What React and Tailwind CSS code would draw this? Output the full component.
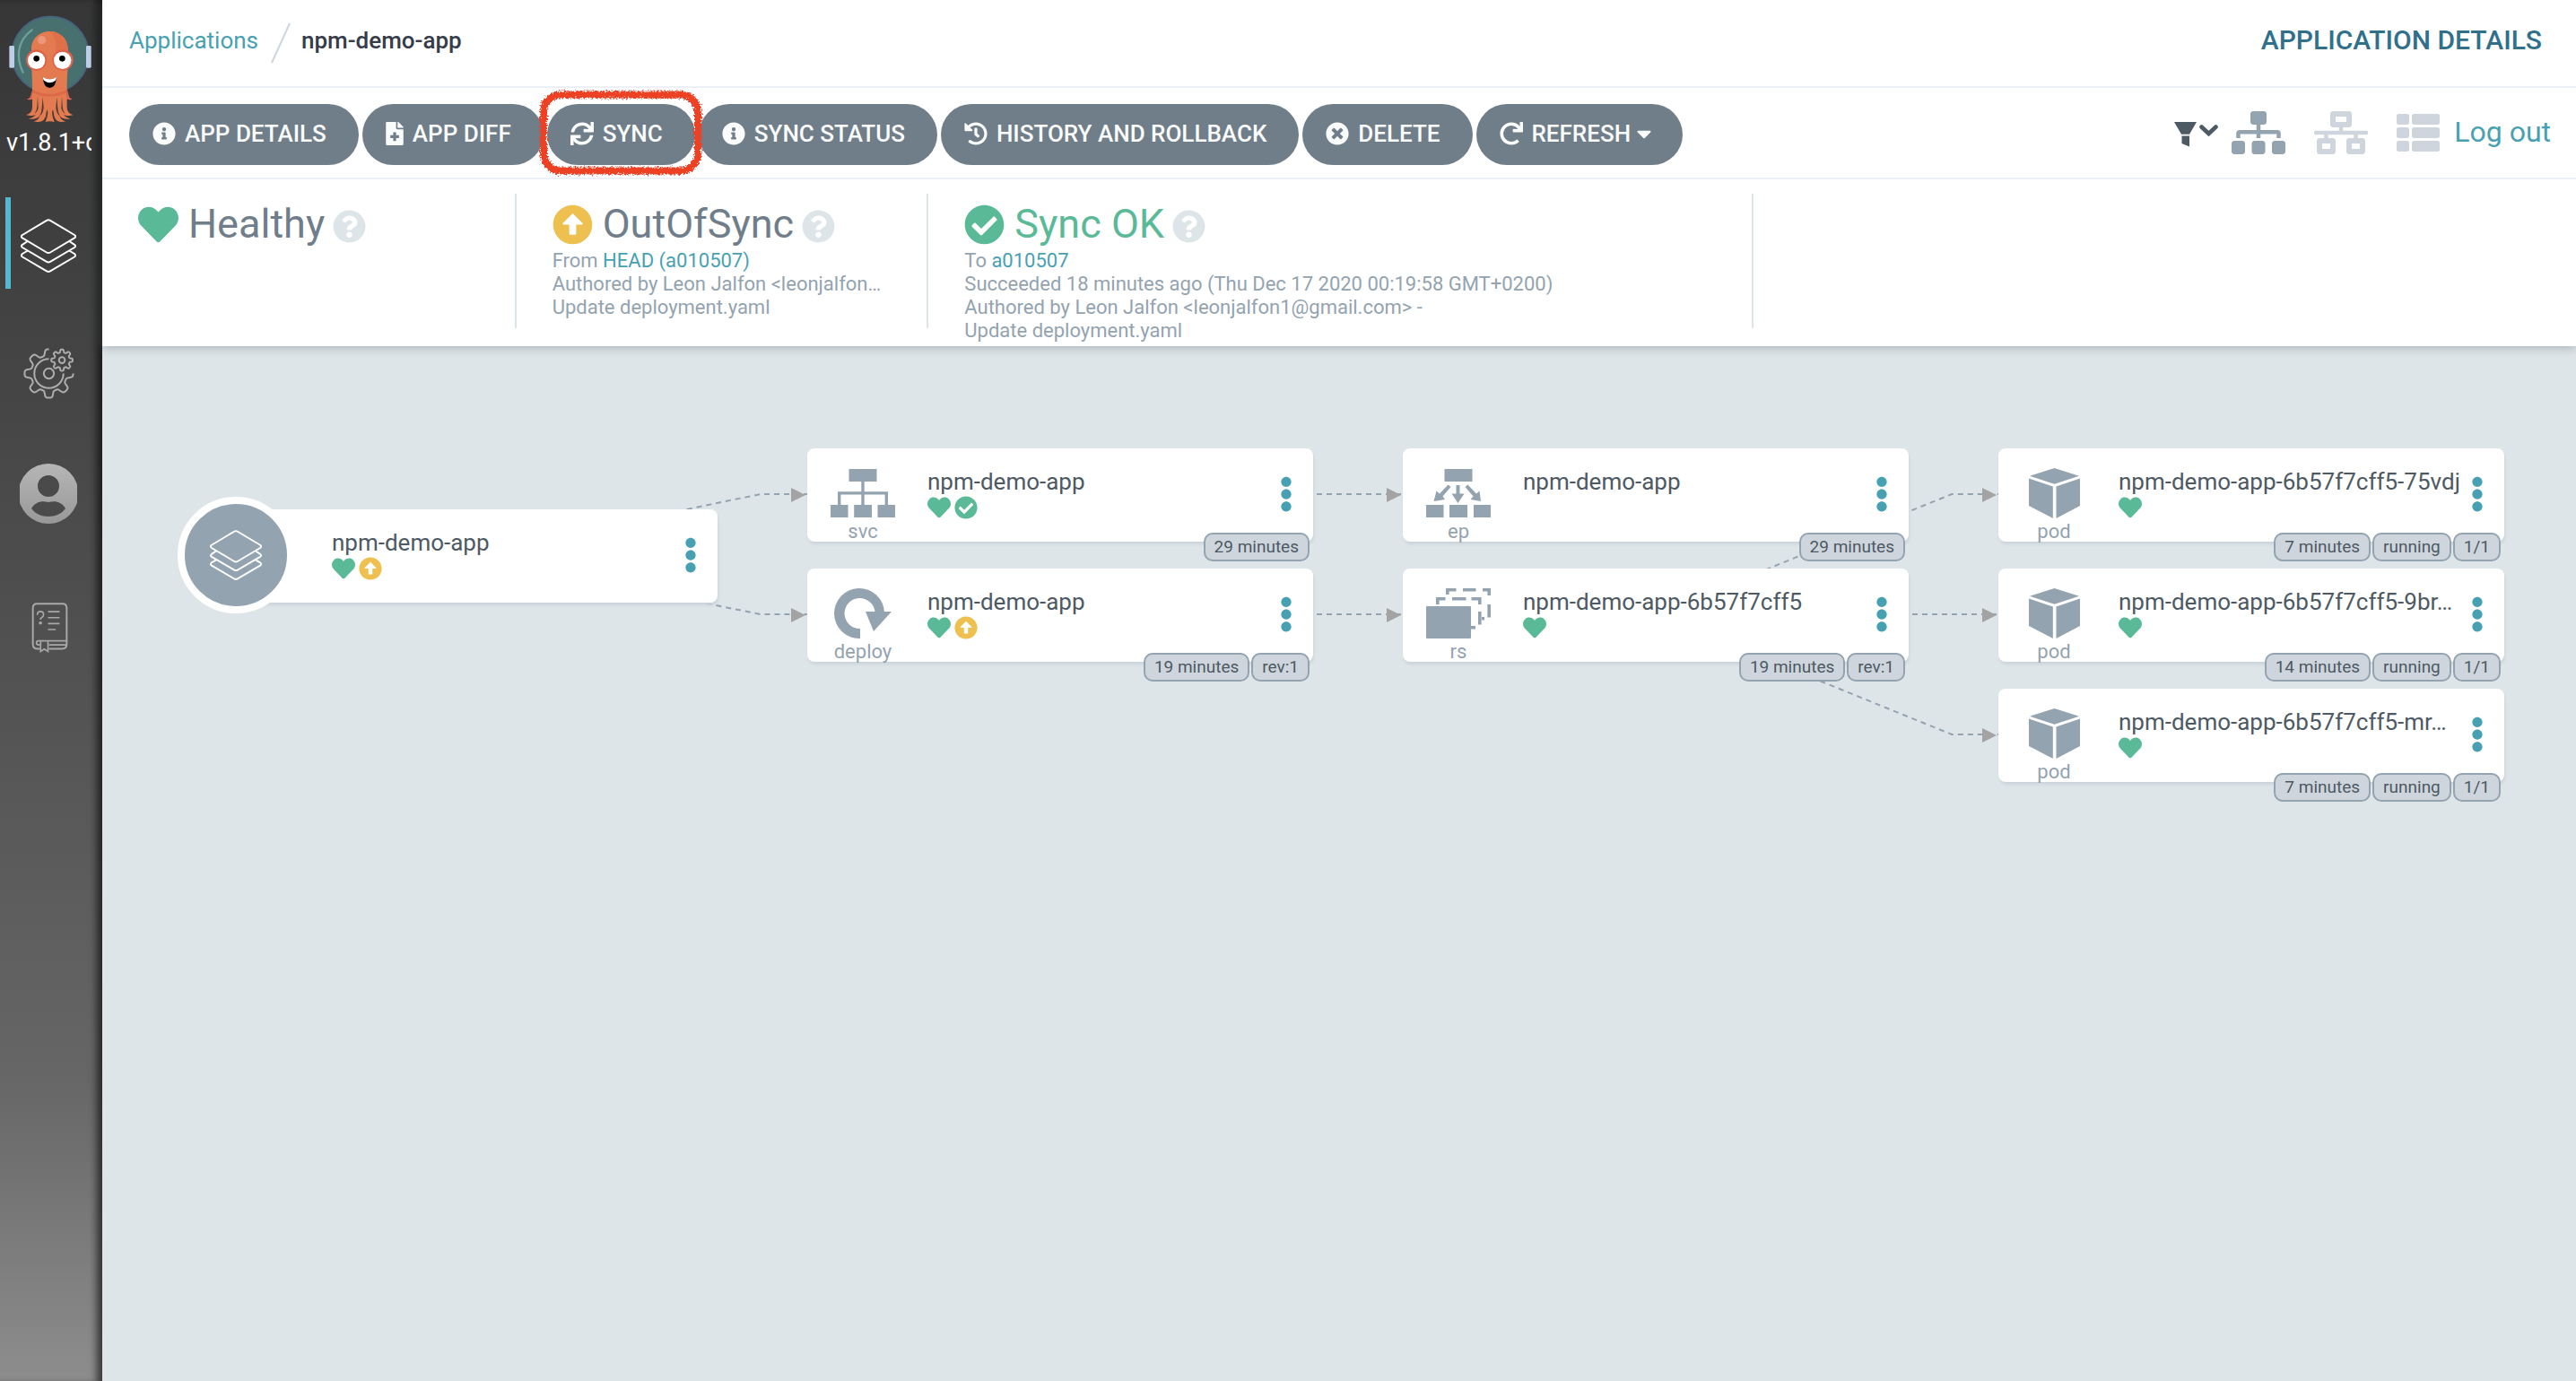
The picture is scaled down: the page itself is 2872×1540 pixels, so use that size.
import React from "react";
import {
  FaInfoCircle,
  FaFileMedical,
  FaSync,
  FaHistory,
  FaTimesCircle,
  FaRedo,
  FaCaretDown,
  FaHeart,
  FaArrowAltCircleUp,
  FaCheckCircle,
  FaQuestionCircle,
  FaSitemap,
  FaNetworkWired,
  FaThList,
  FaEllipsisV,
} from "react-icons/fa";

/* ---------- drawings ---------- */

function ArgoLogo() {
  return (
    <svg viewBox="30 20 276 360" className="h-[120px] w-[92px]" role="img" aria-label="Argo">
      <circle cx="168" cy="152" r="128" fill="#48706f" stroke="#46627c" strokeWidth="5" />
      <path d="M107 69C58 105 52 160 77 211" fill="none" stroke="#6f9f9b" strokeWidth="7" strokeLinecap="round" />
      <rect x="31" y="122" width="17" height="74" rx="4" fill="#bdcfe8" />
      <rect x="288" y="122" width="17" height="74" rx="4" fill="#bdcfe8" />
      <path d="M106 270C104 290 102 298 90 301C98 304 106 303 110 300Z" fill="#dc6650" />
      <path d="M227 270C229 290 231 298 242 301C234 304 226 303 222 300Z" fill="#dc6650" />
      <path
        d="M105 133C105 98 132 74 166 74S227 98 227 133V190C225 215 224 240 224 262V325C224 342 232 350 246 353C234 357 220 357 213 352C218 360 226 364 236 366C222 370 206 366 199 356C201 366 208 372 220 375C204 379 190 377 184 364L168 330L150 364C144 377 130 379 112 375C124 372 131 366 133 356C126 366 110 370 96 366C106 364 114 360 119 352C112 357 98 357 86 353C100 350 108 342 108 325V262C108 240 107 215 105 190Z"
        fill="#e47b50"
      />
      <path d="M166 74C200 74 227 98 227 133V160H186C190 120 186 90 166 74Z" fill="#df7049" />
      <path d="M108 268Q166 298 224 268V279Q166 306 108 279Z" fill="#dc6a48" />
      <path d="M126 290L128 330Q126 343 115 349Q124 338 124 325ZM143 294L146 330Q144 350 132 358Q140 345 140 330ZM190 294L187 330Q189 350 201 358Q193 345 193 330ZM207 290L205 330Q207 343 218 349Q209 338 209 325Z" fill="#4a3a35" />
      <path d="M160 330L152 377Q166 372 182 377L174 330Z" fill="#e47b50" />
      <path d="M157 335L160 345Q158 368 150 377Q153 365 154 350ZM177 335L174 345Q176 368 184 377Q181 365 180 350Z" fill="#4a3a35" />
      <circle cx="140" cy="103" r="14" fill="#e9987a" />
      <circle cx="122" cy="170" r="35" fill="#df6248" />
      <circle cx="210" cy="170" r="35" fill="#df6248" />
      <circle cx="122" cy="171" r="29" fill="#fff" />
      <circle cx="209" cy="171" r="29" fill="#fff" />
      <circle cx="122" cy="165" r="10" fill="#000" />
      <circle cx="208" cy="165" r="10" fill="#000" />
      <path d="M143 226Q166 242 189 226Q187 263 166 263Q146 263 143 226Z" fill="#000" />
      <path d="M143 226Q166 242 189 226Q188 236 184 240Q166 252 149 240Q144 236 143 226Z" fill="#fff" />
    </svg>
  );
}

function Layers({ className }) {
  return (
    <svg viewBox="0 0 62 60" className={className} fill="none" stroke="#fff" strokeWidth="2" strokeLinejoin="round" strokeLinecap="round" aria-hidden="true">
      <path d="M29 1.8Q31 .6 33 1.8L60 18Q62.400 19.700 60 21.400L33 37.500Q31 38.700 29 37.500L2 21.400Q-.4 19.700 2 18Z" />
      <path d="M7 25.500L2 28.800Q-.2 30.500 2 32L29 47.800Q31 49 33 47.800L60 32Q62.200 30.500 60 28.800L55 25.500" />
      <path d="M7 36L2 39Q-.2 41 2 42.500L29 58.300Q31 59.500 33 58.300L60 42.500Q62.200 41 60 39L55 36" />
    </svg>
  );
}

function gearPath(cx, cy, base, amp, teeth, from, to, closed) {
  const pts = [];
  for (let a = from; a <= to; a += 2) {
    const t = (a * Math.PI) / 180;
    const r = base + amp * Math.tanh(2.2 * Math.cos(teeth * t));
    pts.push((cx + r * Math.cos(t)).toFixed(1) + " " + (cy + r * Math.sin(t)).toFixed(1));
  }
  return "M" + pts.join("L") + (closed ? "Z" : "");
}

function Gears() {
  return (
    <svg viewBox="76 142 172 172" className="h-[57px] w-[57px]" fill="none" stroke="#adadad" strokeWidth="6" strokeLinejoin="round" aria-hidden="true">
      <path d={gearPath(162, 228, 71, 11, 8, 0, 270, false)} />
      <path d="M162 179A49 49 0 1 0 211 228" />
      <circle cx="162" cy="228" r="17" />
      <path d={gearPath(206, 183, 31, 5, 8, 0, 358, true)} />
      <circle cx="206" cy="183" r="10" />
    </svg>
  );
}

function UserBadge() {
  return (
    <svg viewBox="0 0 64 67" className="h-[67px] w-[64px]" aria-hidden="true">
      <defs>
        <linearGradient id="user-fill" x1="0" y1="0" x2="0" y2="1">
          <stop offset="0" stopColor="#b6b6b6" />
          <stop offset="1" stopColor="#989898" />
        </linearGradient>
      </defs>
      <path
        fillRule="evenodd"
        fill="url(#user-fill)"
        d="M32 0A33.500 33.500 0 1 1 32 67A33.500 33.500 0 1 1 32 0ZM32 13A12 12 0 1 0 32 37A12 12 0 1 0 32 13ZM13 50C21 62 43 62 51 50C47 43 40 41 32 43C24 41 17 43 13 50Z"
      />
    </svg>
  );
}

function Book() {
  return (
    <svg viewBox="103 993 124 174" className="h-[58px] w-[41px]" fill="none" stroke="#a8a8a8" strokeWidth="6" aria-hidden="true">
      <path d="M132 1151H124Q108 1151 108 1135V1013Q108 999 122 999H208Q222 999 222 1013V1136Q222 1151 206 1151H162" />
      <path d="M222 1124H127Q120 1124 120 1131Q120 1138 127 1138H132M162 1138H222" strokeWidth="5" />
      <path d="M134 1126V1160L146.500 1152L159 1160V1126" strokeWidth="5" />
      <path d="M159 1026H198M159 1046H198M159 1066H198M159 1086H185" strokeWidth="5" />
      <path d="M123 1037Q123 1025 133.500 1025T144 1036Q144 1042 138 1045Q133.500 1047 133.500 1053" strokeWidth="5" />
      <circle cx="133.500" cy="1064" r="3.500" fill="#a8a8a8" strokeWidth="4" />
    </svg>
  );
}

function SvcIcon() {
  return (
    <svg viewBox="0 0 72 56" className="h-14 w-[72px] shrink-0" fill="#93a3b0" aria-hidden="true">
      <path d="M20.500 1H51.500V15H20.500ZM34.300 15H37.700V26.200H64V41H60.600V29.600H37.700V41H34.300V29.600H11.400V41H8V26.200H34.300ZM0 41H19.500V55H0ZM26.200 41H46V55H26.200ZM52.500 41H72V55H52.500Z" />
    </svg>
  );
}

function EpIcon() {
  return (
    <svg viewBox="0 0 72 56" className="h-14 w-[72px] shrink-0" fill="#93a3b0" aria-hidden="true">
      <path d="M20.500 1H51.500V15H20.500ZM0 41H19.500V55H0ZM26 41H46V55H26ZM53 41H72V55H53Z" />
      <path d="M33.500 19H37.500V28.500H42.500L35.500 39L28.500 28.500H33.500Z" />
      <path d="M24.500 18.500L27.500 21L18.500 31.500L21 35L8.500 37L11.500 25.500L15 28.500Z" />
      <path d="M46.500 18.500L43.500 21L52.500 31.500L49.500 35L61 37L59.500 25.500L56 28.500Z" />
    </svg>
  );
}

function DeployIcon() {
  return (
    <svg viewBox="0 0 64 56" className="h-14 w-16 shrink-0" fill="#93a3b0" aria-hidden="true">
      <path d="M29 56A28 28 0 1 1 56 27H45.500A17 17 0 1 0 29 45Z" />
      <path d="M35 26H64L44 48Z" />
    </svg>
  );
}

function RsIcon() {
  return (
    <svg viewBox="0 0 72 56" className="h-14 w-[72px] shrink-0" fill="none" stroke="#93a3b0" strokeWidth="3.600" aria-hidden="true">
      <rect x="0" y="20" width="50" height="36" rx="1" fill="#93a3b0" stroke="none" />
      <path d="M12.800 18V11.800H21.500M29 11.800H44.500M50.500 11.800H59.800V18M59.800 26V40.500M50 43.800H55" />
      <path d="M23.800 7V1.800H33.500M41 1.800H55.500M63 1.800H70.200V8M70.200 18V32.500M62 33.800H65" />
    </svg>
  );
}

function PodIcon() {
  return (
    <svg viewBox="0 0 57 56" className="h-14 w-[57px] shrink-0" fill="#93a3b0" aria-hidden="true">
      <path d="M28.500 0L56 8.800L28.500 17.800L1 8.800ZM0 11.500L26.800 20.500V56L0 42ZM57 11.500L30.500 20.500V56L57 42Z" />
    </svg>
  );
}

function Funnel() {
  return (
    <svg viewBox="0 0 49 28" className="h-7 w-[49px]" fill="#4d5963" aria-hidden="true">
      <path d="M0 0H25L17 13.800H8ZM8.500 15.500H17V27.500L8.500 24Z" />
      <path d="M30.500 5.500L38.500 13L46.500 5.500" fill="none" stroke="#4d5963" strokeWidth="4.600" strokeLinecap="round" />
    </svg>
  );
}

function MarkerRing() {
  return (
    <svg viewBox="0 0 192 104" preserveAspectRatio="none" className="pointer-events-none absolute -inset-x-[14px] -inset-y-[18px] z-10 h-[104px] w-[calc(100%+28px)] overflow-visible" aria-hidden="true">
      <defs>
        <filter id="crayon" x="-10%" y="-10%" width="120%" height="120%">
          <feTurbulence type="fractalNoise" baseFrequency="0.55" numOctaves="2" seed="4" result="noise" />
          <feDisplacementMap in="SourceGraphic" in2="noise" scale="7" xChannelSelector="R" yChannelSelector="G" />
        </filter>
      </defs>
      <rect x="10" y="7.500" width="171" height="85" rx="19" fill="none" stroke="#ee3f24" strokeWidth="8" filter="url(#crayon)" />
    </svg>
  );
}

/* ---------- data ---------- */

const actions = [
  { label: "APP DETAILS", Icon: FaInfoCircle },
  { label: "APP DIFF", Icon: FaFileMedical, narrow: true },
  { label: "SYNC", Icon: FaSync, marked: true },
  { label: "SYNC STATUS", Icon: FaInfoCircle },
  { label: "HISTORY AND ROLLBACK", Icon: FaHistory },
  { label: "DELETE", Icon: FaTimesCircle },
  { label: "REFRESH", Icon: FaRedo, caret: true },
];

const nodes = [
  { id: "app", x: 122, y: 182, name: "npm-demo-app", root: true, health: true, sync: "out", tags: [] },
  { id: "svc", x: 786, y: 114, kind: "svc", Icon: SvcIcon, name: "npm-demo-app", health: true, sync: "ok", tags: ["29 minutes"] },
  { id: "deploy", x: 786, y: 248, kind: "deploy", Icon: DeployIcon, name: "npm-demo-app", health: true, sync: "out", tags: ["19 minutes", "rev:1"] },
  { id: "ep", x: 1450, y: 114, kind: "ep", Icon: EpIcon, name: "npm-demo-app", tags: ["29 minutes"] },
  { id: "rs", x: 1450, y: 248, kind: "rs", Icon: RsIcon, name: "npm-demo-app-6b57f7cff5", health: true, tags: ["19 minutes", "rev:1"] },
  { id: "pod1", x: 2114, y: 114, kind: "pod", Icon: PodIcon, name: "npm-demo-app-6b57f7cff5-75vdj", health: true, tags: ["7 minutes", "running", "1/1"] },
  { id: "pod2", x: 2114, y: 248, kind: "pod", Icon: PodIcon, name: "npm-demo-app-6b57f7cff5-9br…", health: true, tags: ["14 minutes", "running", "1/1"] },
  { id: "pod3", x: 2114, y: 382, kind: "pod", Icon: PodIcon, name: "npm-demo-app-6b57f7cff5-mr…", health: true, tags: ["7 minutes", "running", "1/1"] },
];

const edges = [
  ["app", "svc"],
  ["app", "deploy"],
  ["svc", "ep"],
  ["deploy", "rs"],
  ["rs", "pod1"],
  ["rs", "pod2"],
  ["rs", "pod3"],
];

/* ---------- pieces ---------- */

function Sidebar() {
  return (
    <aside className="flex w-[114px] shrink-0 flex-col bg-[linear-gradient(to_bottom,#363636_0%,#444444_26%,#525252_49%,#666666_78%,#8d8d8d_100%)] pt-[17px] pr-1.5 shadow-[inset_-10px_0_8px_-4px_rgba(0,0,0,0.6)]">
      <a href="#home" className="ml-2.5 block w-[92px]">
        <ArgoLogo />
      </a>
      <div className="mt-1.5 ml-[7px] w-[95px] overflow-hidden text-[27px] leading-8 whitespace-nowrap text-white">v1.8.1+c</div>
      <nav className="mt-[45px] flex flex-col gap-[41px]">
        <a href="#applications" aria-label="Applications" className="ml-1.5 flex h-[102px] items-center justify-center border-l-[6px] border-[#55b9cd] pt-1.5 pr-3">
          <Layers className="h-[60px] w-[62px]" />
        </a>
        <a href="#settings" aria-label="Settings" className="flex h-[102px] items-center justify-center pt-1">
          <Gears />
        </a>
        <a href="#user" aria-label="User info" className="flex h-[102px] items-center justify-center pb-3.5">
          <UserBadge />
        </a>
        <a href="#help" aria-label="Documentation" className="flex h-[102px] items-center justify-center pl-0.5">
          <Book />
        </a>
      </nav>
    </aside>
  );
}

function ActionButton({ label, Icon, narrow, marked, caret }) {
  return (
    <div className="relative">
      <button type="button" className="flex h-[68px] items-center rounded-full bg-[#707e89] pr-[36px] pb-0.5 pl-[26px] text-[26px] leading-8 font-medium whitespace-nowrap text-[#fafbfb]">
        <Icon className={narrow ? "-mx-[3px] size-[26px]" : "size-[26px]"} />
        <span className="ml-2.5">{label}</span>
        {caret && <FaCaretDown className="ml-0.5 -mr-1.5 size-[26px]" />}
      </button>
      {marked && <MarkerRing />}
    </div>
  );
}

function HelpMark() {
  return (
    <button type="button" aria-label="Help" className="mt-1 -ml-0.5 text-[#dee5e9]">
      <FaQuestionCircle className="size-[37px]" />
    </button>
  );
}

function StatusTitle({ icon, children }) {
  return (
    <div className="mt-1.5 flex h-14 items-center gap-[11px] text-[45px] leading-[56px] whitespace-nowrap">
      {icon}
      {children}
      <HelpMark />
    </div>
  );
}

function SyncIcon({ state, className }) {
  return state === "ok" ? <FaCheckCircle className={className + " text-[#5aba98]"} /> : <FaArrowAltCircleUp className={className + " text-[#edc04f]"} />;
}

function Node({ node }) {
  const { Icon } = node;
  return (
    <article className="absolute flex h-[104px] w-[564px] rounded-lg bg-white shadow-[1px_3px_3px_#ccd5da]" style={{ left: node.x, top: node.y }}>
      {node.root ? (
        <div className="-mt-3.5 -ml-[38px] flex size-[130px] shrink-0 items-center justify-center rounded-full border-8 border-white bg-[#93a3b0]">
          <Layers className="h-14 w-[58px]" />
        </div>
      ) : (
        <div className="flex w-[124px] shrink-0 flex-col items-center pt-[22px]">
          <Icon />
          <span className="mt-0.5 text-[22px] leading-[26px] text-[#93a3b0]">{node.kind}</span>
        </div>
      )}
      <div className={node.root ? "ml-[42px] min-w-0 flex-1 pt-[21px]" : "ml-2.5 min-w-0 flex-1 pt-[21px]"}>
        <div className="truncate text-[26px] leading-8 text-[#4d5963]">{node.name}</div>
        <div className="flex gap-1">
          {node.health && <FaHeart className="size-[26px] text-[#5aba98]" />}
          {node.sync && <SyncIcon state={node.sync} className="size-[26px]" />}
        </div>
      </div>
      <button type="button" aria-label={"Actions for " + node.name} className="mr-5 mb-0.5 flex w-5 shrink-0 justify-center self-center text-[#48a1b2]">
        <FaEllipsisV className="size-10 shrink-0" />
      </button>
      <ul className="absolute right-1 -bottom-[22px] flex gap-0.5">
        {node.tags.map((tag) => (
          <li key={tag} className="flex h-8 items-center rounded-[10px] border-2 border-[#93a3b0] bg-[#ced5dd] px-2.5 text-[19px] leading-7 whitespace-nowrap text-[#4d5963]">
            {tag}
          </li>
        ))}
      </ul>
    </article>
  );
}

function Edges() {
  const byId = Object.fromEntries(nodes.map((n) => [n.id, n]));
  return (
    <svg className="absolute top-0 left-0 h-[600px] w-[2700px]" aria-hidden="true">
      {edges.map(([a, b]) => {
        const from = byId[a];
        const to = byId[b];
        const x1 = from.x + 282;
        const y1 = from.y + 51;
        const x2 = to.x - 52;
        const y2 = to.y + 51;
        return (
          <g key={a + b}>
            <path d={`M${x1} ${y1}L${x2} ${y2}H${to.x}`} fill="none" stroke="#93a3b0" strokeWidth="2" strokeDasharray="6 5" />
            <path d={`M${to.x - 18} ${y2 - 7}L${to.x - 2} ${y2 + 1}L${to.x - 18} ${y2 + 9}Z`} fill="#a3a3a3" />
          </g>
        );
      })}
    </svg>
  );
}

export default function App() {
  return (
    <div className="flex min-h-screen bg-[#dee5e8] font-['Roboto',sans-serif]">
      <Sidebar />
      <div className="flex min-w-0 flex-1 flex-col">
        <header className="relative z-10 bg-white shadow-[0_2px_10px_rgba(90,105,120,0.4)]">
          <div className="flex h-[98px] items-center justify-between border-b-2 border-[#edf1f5] pr-[38px] pb-1.5 pl-[30px]">
            <nav className="flex items-center text-[26px] leading-8">
              <a href="#applications" className="text-[#48a1b2]">
                Applications
              </a>
              <svg viewBox="0 0 22 46" className="mt-1.5 mr-3 ml-3.5 h-[46px] w-[22px]" aria-hidden="true">
                <path d="M21 1L1 45" stroke="#ced6dd" strokeWidth="2" />
              </svg>
              <span className="font-medium text-[#363c4a]">npm-demo-app</span>
            </nav>
            <h1 className="text-[30px] leading-9 font-medium text-[#30708a]">APPLICATION DETAILS</h1>
          </div>

          <div className="flex h-[102px] items-center justify-between border-b-2 border-[#edf1f5] pt-1 pr-7 pl-[30px]">
            <div className="flex gap-1">
              {actions.map((a) => (
                <ActionButton key={a.label} {...a} />
              ))}
            </div>
            <div className="flex items-center pb-1">
              <button type="button" aria-label="Filter" className="mt-1">
                <Funnel />
              </button>
              <button type="button" aria-label="Tree view" className="ml-[15px] text-[#93a3b0]">
                <FaSitemap className="h-12 w-[60px]" />
              </button>
              <button type="button" aria-label="Network view" className="ml-8 text-[#ced5dd]">
                <FaNetworkWired className="h-12 w-[60px]" />
              </button>
              <button type="button" aria-label="List view" className="ml-8 text-[#ced5dd]">
                <FaThList className="size-12" />
              </button>
              <a href="#logout" className="ml-4 pb-0.5 text-[32px] leading-10 text-[#48a1b2]">
                Log out
              </a>
            </div>
          </div>

          <div className="flex h-[186px] pt-4 text-[22px] leading-[26px] text-[#93a3b0]">
            <section className="h-[150px] w-[calc(100%/6+2px)] shrink-0 border-r-2 border-[#dee5e9] px-10">
              <StatusTitle icon={<FaHeart className="size-[45px] text-[#5aba98]" />}>
                <span className="text-[#6f7e8a]">Healthy</span>
              </StatusTitle>
            </section>
            <section className="h-[150px] w-1/6 shrink-0 border-r-2 border-[#dee5e9] px-10">
              <StatusTitle icon={<SyncIcon state="out" className="size-[45px]" />}>
                <span className="text-[#6f7e8a]">OutOfSync</span>
              </StatusTitle>
              <div>
                From{" "}
                <a href="#head" className="text-[#48a1b2]">
                  HEAD (a010507)
                </a>
              </div>
              <div className="truncate">Authored by Leon Jalfon &lt;leonjalfon…</div>
              <div>Update deployment.yaml</div>
            </section>
            <section className="h-[150px] w-1/3 shrink-0 border-r-2 border-[#dee5e9] px-10">
              <StatusTitle icon={<SyncIcon state="ok" className="size-[45px]" />}>
                <span className="text-[#5aba98]">Sync OK</span>
              </StatusTitle>
              <div>
                To{" "}
                <a href="#revision" className="text-[#48a1b2]">
                  a010507
                </a>
              </div>
              <div>Succeeded 18 minutes ago (Thu Dec 17 2020 00:19:58 GMT+0200)</div>
              <div>Authored by Leon Jalfon &lt;leonjalfon1@gmail.com&gt; -</div>
              <div>Update deployment.yaml</div>
            </section>
          </div>
        </header>

        <main className="relative min-h-[600px] flex-1 overflow-auto">
          <Edges />
          {nodes.map((n) => (
            <Node key={n.id} node={n} />
          ))}
        </main>
      </div>
    </div>
  );
}
